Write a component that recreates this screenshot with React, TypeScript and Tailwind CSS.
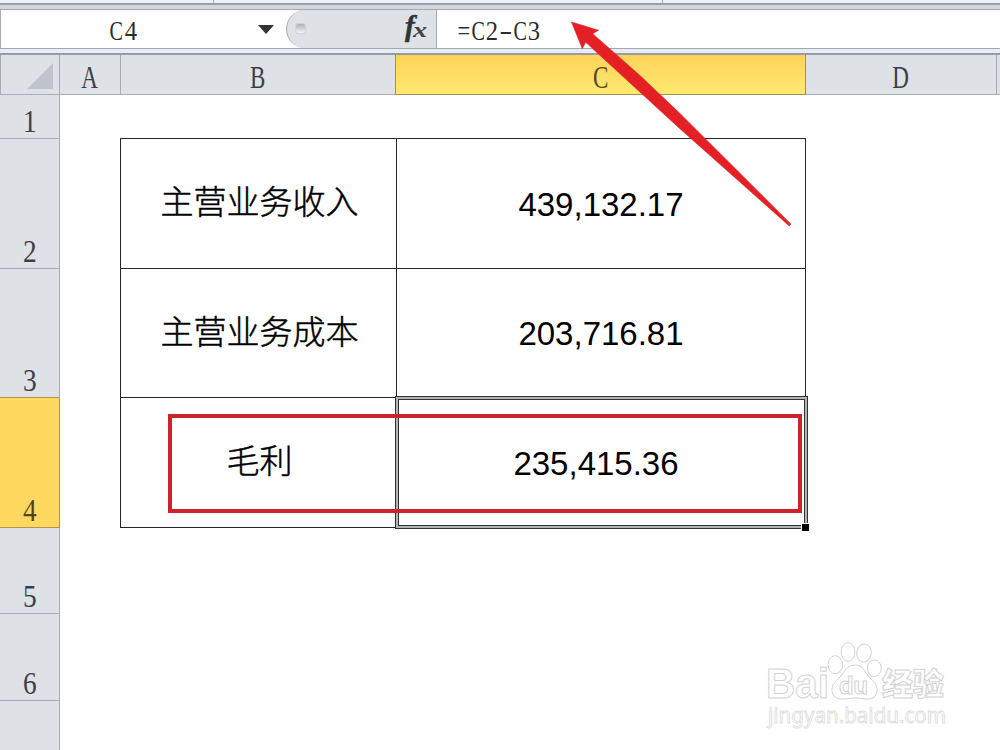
import React from 'react';

const columns = [
  { name: 'A', width: 'w-[61px]', active: false },
  { name: 'B', width: 'w-[275px]', active: false },
  { name: 'C', width: 'w-[410px]', active: true },
  { name: 'D', width: 'w-[191px]', active: false },
];

const rows = [
  { name: '1', height: 'h-[44px]', active: false },
  { name: '2', height: 'h-[130px]', active: false },
  { name: '3', height: 'h-[129px]', active: false },
  { name: '4', height: 'h-[130px]', active: true },
  { name: '5', height: 'h-[86px]', active: false },
  { name: '6', height: 'h-[87px]', active: false },
];

const records = [
  { label: '主营业务收入', amount: '439,132.17', height: 'h-[130px]' },
  { label: '主营业务成本', amount: '203,716.81', height: 'h-[129px]' },
  { label: '毛利', amount: '235,415.36', height: 'h-[130px]' },
];

const glyphScale = (char: string) => {
  if (/[A-Z]/.test(char)) return 'scale-x-[0.72]';
  if (char === '-') return 'scale-x-[1.4] -translate-y-px';
  if (char === '=') return 'scale-x-[0.8]';
  return 'scale-x-[0.88]';
};

// Half-width cells: every character takes the same advance, capitals are squeezed to fit
const MonoText: React.FC<{ text: string; cell: string }> = ({ text, cell }) => (
  <span className="inline-flex font-['Liberation_Serif',serif] leading-none">
    {text.split('').map((char, i) => (
      <span key={i} className={`flex justify-center ${cell}`}>
        <span className={glyphScale(char)}>{char}</span>
      </span>
    ))}
  </span>
);

const FormulaBar: React.FC = () => (
  <div>
    <div className="flex h-[3px] bg-[#eef1f5]">
      <div className="w-[214px] border-r border-[#a9adb3]"></div>
      <div className="w-[449px] border-r border-[#a9adb3]"></div>
    </div>
    <div className="h-[7px] border-t-2 border-b border-t-[#9b9fa7] border-b-[#a4a8ae] bg-[#d2d6dd]"></div>
    <div className="flex h-[38px] bg-white text-[28px] text-[#2b2b2b]">
      <div className="flex w-[286px] items-center border-l border-[#a9adb3]">
        <div className="flex w-[245px] justify-center pt-[3px]">
          <MonoText text="C4" cell="w-[14px]" />
        </div>
        <svg className="ml-[12px] mt-px" width="16" height="9" viewBox="0 0 16 9">
          <path d="M0 0H16L8 9Z" fill="#333" />
        </svg>
      </div>
      <div className="flex w-[151px] items-center rounded-l-[19px] border-l border-r border-[#a5a9af] bg-[#dee2e6]">
        <div className="ml-[8px] mb-px h-[11px] w-[11px] rounded-[3px] border border-[#cfd3d8] bg-linear-to-b from-[#aeb2b8] to-[#f1f3f5]"></div>
        <svg className="ml-[93px] overflow-visible" width="36" height="38" viewBox="0 0 36 38">
          <text x="6" y="26" fontFamily="Liberation Serif, serif" fontStyle="italic" fontWeight="bold" fontSize="29" fill="#333" stroke="#333" strokeWidth="0.5">f</text>
          <text x="14" y="27" fontFamily="Liberation Serif, serif" fontStyle="italic" fontWeight="bold" fontSize="22" fill="#444" textLength="14" lengthAdjust="spacingAndGlyphs">x</text>
        </svg>
      </div>
      <div className="flex items-center pl-[20px] pt-[3px]">
        <MonoText text="=C2-C3" cell="w-[14px]" />
      </div>
    </div>
    <div className="h-[7px] border-t border-b-2 border-t-[#a4a8ae] border-b-[#979ba3] bg-[#e9edf3]"></div>
  </div>
);

const ColumnHeader: React.FC = () => (
  <div className="flex h-[40px] text-[32px] text-[#3d3f45]">
    <div className="flex w-[60px] shrink-0 justify-end border-r border-b border-l border-[#a9adb3] bg-[#dee2e6] pr-[6px] pt-[8px]">
      <svg width="26" height="26" viewBox="0 0 26 26">
        <path d="M26 0V26H0Z" fill="#bfc5ca" />
      </svg>
    </div>
    {columns.map((col) => (
      <div
        key={col.name}
        className={`flex shrink-0 items-center justify-center border-r border-b pt-[5px] ${col.width} ${
          col.active ? 'border-[#a98f4c] bg-linear-to-b from-[#ffd35a] to-[#ffe970] text-[#51491f]' : 'border-[#a9adb3] bg-[#dee2e6]'
        } ${col.name === 'B' ? 'border-r-[#a98f4c]' : ''}`}
      >
        <MonoText text={col.name} cell="w-[16px]" />
      </div>
    ))}
    <div className="grow border-b border-[#a9adb3] bg-[#dee2e6]"></div>
  </div>
);

const RowHeader: React.FC = () => (
  <div className="flex w-[60px] shrink-0 flex-col text-[31px] text-[#3d3f45]">
    {rows.map((row) => (
      <div
        key={row.name}
        className={`flex shrink-0 items-end justify-center border-r border-b pb-[1px] ${row.height} ${
          row.active ? 'border-[#b2924c] bg-[#ffd95f] text-[#51431f]' : 'border-[#a9adb3] bg-[#dee2e6]'
        } ${row.name === '3' ? 'border-b-[#b2924c]' : ''}`}
      >
        <MonoText text={row.name} cell="w-[16px]" />
      </div>
    ))}
    <div className="grow border-r border-[#a9adb3] bg-[#dee2e6]"></div>
  </div>
);

const Watermark: React.FC = () => (
  <svg
    className="absolute left-[760px] top-[636px] overflow-visible"
    width="200"
    height="100"
    viewBox="760 636 200 100"
    fill="#fff"
    stroke="#d2d2d2"
    strokeWidth="1"
  >
    <text x="766" y="698" fontFamily="Liberation Sans, sans-serif" fontWeight="bold" fontSize="42" textLength="63" lengthAdjust="spacingAndGlyphs">Bai</text>
    <ellipse cx="835.3" cy="664.7" rx="7.3" ry="9" />
    <ellipse cx="848" cy="652" rx="6.8" ry="9.4" />
    <ellipse cx="864" cy="653" rx="7.3" ry="9" transform="rotate(10 864 653)" />
    <ellipse cx="874.3" cy="668.3" rx="7" ry="8.3" />
    <path d="M855 665C848 665 845 670 841 676C836 681 832 684 832 690C832 696 836 699 842 699C848 699 850 698 855 698C860 698 863 699 868 699C873 699 877 696 877 690C877 684 873 681 868 676C864 670 862 665 855 665Z" />
    <text x="839" y="694" fontFamily="Liberation Sans, sans-serif" fontWeight="bold" fontSize="24" textLength="29" lengthAdjust="spacingAndGlyphs">du</text>
    <text x="882" y="695" fontFamily="Noto Sans CJK SC, sans-serif" fontWeight="900" fontSize="31" textLength="62" lengthAdjust="spacingAndGlyphs">经验</text>
    <text x="768" y="723" fontFamily="Noto Sans, sans-serif" fontSize="21" strokeWidth="0.8" stroke="#dadada" textLength="178" lengthAdjust="spacingAndGlyphs">jingyan.baidu.com</text>
  </svg>
);

const App: React.FC = () => {
  return (
    <div className="relative flex h-[750px] w-[1000px] flex-col overflow-hidden bg-white">
      <FormulaBar />
      <ColumnHeader />
      <div className="flex grow">
        <RowHeader />
        <div className="ml-[60px] mt-[43px] h-[390px] w-[686px] border-t border-l border-[#262626]">
          {records.map((record) => (
            <div key={record.label} className={`flex ${record.height}`}>
              <div className="flex w-[276px] items-center justify-center border-r border-b border-[#262626] pb-[5px] pl-[2px] font-['Noto_Sans_CJK_SC',sans-serif] text-[33px] font-light text-black [-webkit-text-stroke:0.5px_#000]">
                {record.label}
              </div>
              <div className="flex w-[409px] items-center justify-center border-r border-b border-[#262626] pt-[2px] font-['Liberation_Sans',sans-serif] text-[33px] text-black">
                <span className={record.label === '毛利' ? 'mr-[10px]' : ''}>{record.amount}</span>
              </div>
            </div>
          ))}
        </div>
      </div>

      {/* Selected cell with its fill handle */}
      <div className="absolute left-[395px] top-[396px] h-[133px] w-[413px] border border-[#333]">
        <div className="h-full w-full border-2 border-[#b4b4b4]">
          <div className="h-full w-full border border-[#333]"></div>
        </div>
        <div className="absolute -right-[2px] -bottom-[3px] h-[8px] w-[8px] border-t border-l border-white bg-black"></div>
      </div>

      {/* Annotations */}
      <div className="absolute left-[168px] top-[414px] h-[99px] w-[634px] border-[4px] border-[#cb222b]"></div>
      <svg className="absolute left-0 top-0" width="1000" height="240" viewBox="0 0 1000 240">
        <path d="M571.5 22L598.5 30.3L592.7 33.7L640 75.5L680 113.5L790.8 224L789.3 226L678 127L585.7 42.3L582.3 48.7Z" fill="#e52025" stroke="#d8232a" strokeWidth="0.6" />
      </svg>

      <Watermark />
    </div>
  );
};

export default App;
